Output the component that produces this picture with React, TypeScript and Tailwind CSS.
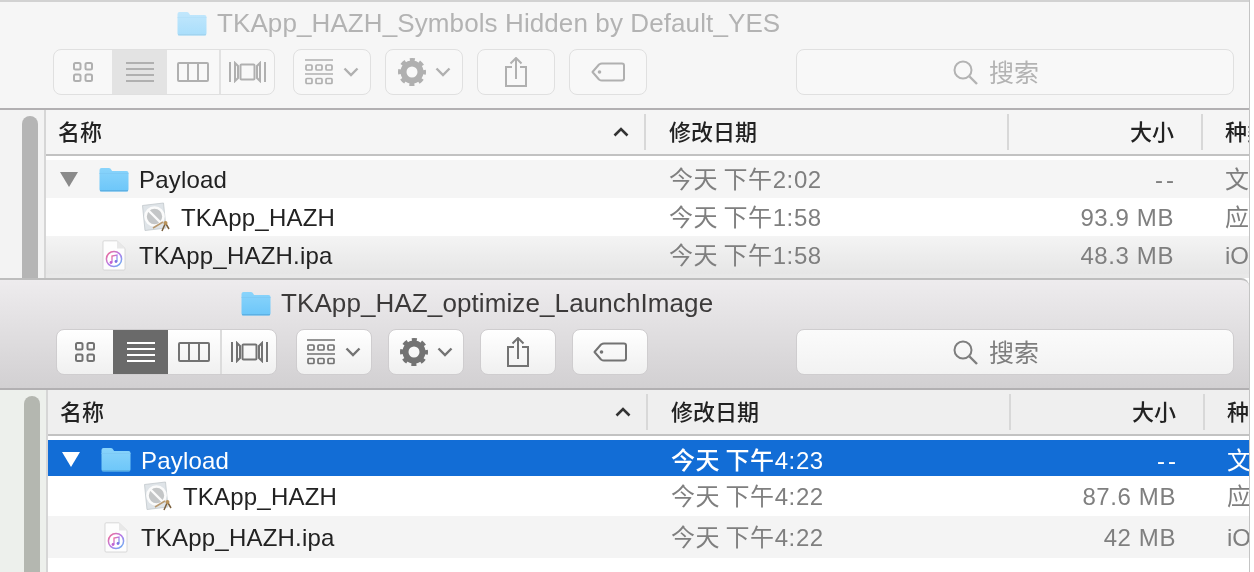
import { useId } from 'react';

const sans = "font-['Liberation_Sans','Noto_Sans_CJK_SC',sans-serif]";

function Folder({ w = 30, h = 25, dim = false }: { w?: number; h?: number; dim?: boolean }) {
  const id = useId();
  return (
    <svg width={w} height={h} viewBox="0 0 30 25" className="shrink-0">
      <defs>
        <linearGradient id={id} x1="0" y1="0" x2="0" y2="1">
          <stop offset="0" stopColor={dim ? '#c2e7fc' : '#8ad4fb'} />
          <stop offset="1" stopColor={dim ? '#a9defb' : '#6cc6f9'} />
        </linearGradient>
      </defs>
      <path d="M0.5 3Q0.5 1 2.5 1H10Q11.5 1 12.5 3L13 4H27.5Q29.5 4 29.5 6V22.5Q29.5 24.5 27.5 24.5H2.5Q0.5 24.5 0.5 22.5Z" fill={`url(#${id})`} />
      <path d="M0.5 6.5H29.5" stroke={dim ? '#b4e0f9' : '#7cc8f4'} strokeWidth="0.8" />
      <path d="M1 23.8H29" stroke={dim ? '#9fd0ec' : '#58a9dc'} strokeWidth="1" />
    </svg>
  );
}

function AppIcon() {
  return (
    <svg width="28" height="31" viewBox="0 0 28 31" className="shrink-0">
      <path d="M0.5 3.5L21.5 1L24 26L3 28.5Z" fill="#dfe4e8" stroke="#c2c8cc" strokeWidth="0.8" />
      <circle cx="12.5" cy="14.5" r="9" fill="#c4c6c7" stroke="#fbfbfb" strokeWidth="2.6" />
      <path d="M6.5 8.5L18.5 20.5" stroke="#fbfbfb" strokeWidth="2.4" />
      <path d="M11 26L21 20" stroke="#b89a72" strokeWidth="1.6" />
      <path d="M20 29L23.5 21L27 27" stroke="#7a5f3c" strokeWidth="1.5" fill="none" />
      <circle cx="23.5" cy="21" r="2" fill="#b9925a" />
    </svg>
  );
}

function IpaIcon() {
  const id = useId();
  return (
    <svg width="24" height="31" viewBox="0 0 24 31" className="shrink-0">
      <defs>
        <linearGradient id={id} x1="0" y1="0" x2="1" y2="1">
          <stop offset="0" stopColor="#f46a8e" />
          <stop offset="0.5" stopColor="#b67be8" />
          <stop offset="1" stopColor="#5fb6f4" />
        </linearGradient>
      </defs>
      <path d="M1 2Q1 .8 2 .8H15L23 8.5V29Q23 30 22 30H2Q1 30 1 29Z" fill="#fdfdfd" stroke="#cfcfcf" strokeWidth="0.8" />
      <path d="M15 .8V8.5H23Z" fill="#e8e8e8" />
      <circle cx="12" cy="19" r="7.6" fill="#fff" stroke={`url(#${id})`} strokeWidth="1.5" />
      <path d="M10 22.5V16L15 15V21.5" fill="none" stroke={`url(#${id})`} strokeWidth="1.3" />
      <circle cx="9" cy="22.5" r="1.4" fill="#c060d0" />
      <circle cx="14" cy="21.5" r="1.4" fill="#8070e0" />
    </svg>
  );
}

function Triangle({ selected }: { selected?: boolean }) {
  return (
    <svg width="18" height="15" viewBox="0 0 18 15" className="shrink-0">
      <path d="M0 0H18L9 15Z" fill={selected ? '#ffffff' : '#8a8a8a'} />
    </svg>
  );
}

function GridIcon() {
  return (
    <svg width="20" height="20" viewBox="0 0 20 20" fill="none" stroke="currentColor" strokeWidth="2">
      <rect x="1" y="1" width="6.5" height="6.5" rx="1.5" />
      <rect x="12.5" y="1" width="6.5" height="6.5" rx="1.5" />
      <rect x="1" y="12.5" width="6.5" height="6.5" rx="1.5" />
      <rect x="12.5" y="12.5" width="6.5" height="6.5" rx="1.5" />
    </svg>
  );
}

function ListIcon() {
  return (
    <svg width="28" height="20" viewBox="0 0 28 20" fill="currentColor">
      <rect y="0" width="28" height="2" />
      <rect y="6" width="28" height="2" />
      <rect y="12" width="28" height="2" />
      <rect y="18" width="28" height="2" />
    </svg>
  );
}

function ColumnsIcon() {
  return (
    <svg width="32" height="20" viewBox="0 0 32 20" fill="none" stroke="currentColor" strokeWidth="2">
      <rect x="1" y="1" width="30" height="18" rx="1" />
      <path d="M11 1V19M21 1V19" />
    </svg>
  );
}

function CoverIcon() {
  return (
    <svg width="37" height="22" viewBox="0 0 37 22" fill="none" stroke="currentColor" strokeWidth="2">
      <path d="M1 1V21M6 2V20L9 17V5Z" />
      <rect x="11.5" y="3.5" width="14" height="15" rx="1" />
      <path d="M36 1V21M31 2V20L28 17V5Z" />
    </svg>
  );
}

function GroupIcon() {
  return (
    <svg width="28" height="26" viewBox="0 0 28 26" fill="none" stroke="currentColor" strokeWidth="1.7">
      <path d="M0 1H28M0 15H28" />
      <rect x="1" y="6" width="6" height="5" rx="1" />
      <rect x="11" y="6" width="6" height="5" rx="1" />
      <rect x="21" y="6" width="6" height="5" rx="1" />
      <rect x="1" y="19.5" width="6" height="5" rx="1" />
      <rect x="11" y="19.5" width="6" height="5" rx="1" />
      <rect x="21" y="19.5" width="6" height="5" rx="1" />
    </svg>
  );
}

function Chevron() {
  return (
    <svg width="16" height="10" viewBox="0 0 16 10" fill="none" stroke="currentColor" strokeWidth="2.4">
      <path d="M1.5 1.5L8 8L14.5 1.5" />
    </svg>
  );
}

function GearIcon() {
  return (
    <svg width="28" height="28" viewBox="0 0 28 28" fill="none" stroke="currentColor">
      <circle cx="14" cy="14" r="8.5" strokeWidth="6" />
      <circle cx="14" cy="14" r="12" strokeWidth="4" strokeDasharray="4.9 4.52" strokeDashoffset="2.45" />
    </svg>
  );
}

function ShareIcon() {
  return (
    <svg width="22" height="30" viewBox="0 0 22 30" fill="none" stroke="currentColor" strokeWidth="2">
      <path d="M7 10H1V29H21V10H15" />
      <path d="M11 22V1M5.5 6.5L11 1L16.5 6.5" />
    </svg>
  );
}

function TagIcon() {
  return (
    <svg width="34" height="20" viewBox="0 0 34 20" fill="none" stroke="currentColor" strokeWidth="2">
      <path d="M11 1.5H31Q33 1.5 33 3.5V16.5Q33 18.5 31 18.5H11Q9.5 18.5 8 17.5L1.5 10L8 2.5Q9.5 1.5 11 1.5Z" strokeLinejoin="round" />
      <circle cx="8.5" cy="10" r="1.8" fill="currentColor" stroke="none" />
    </svg>
  );
}

function SearchIcon() {
  return (
    <svg width="25" height="25" viewBox="0 0 25 25" fill="none" stroke="currentColor" strokeWidth="2" className="shrink-0">
      <circle cx="10" cy="10" r="8.5" />
      <path d="M16.5 16.5L24 24" strokeWidth="2.4" />
    </svg>
  );
}

type Theme = {
  win: string;
  title: string;
  btn: string;
  sep: string;
  activeSeg: string;
  search: string;
  sidebar: string;
  thumb: string;
  header: string;
  icon: string;
  rowOdd: string;
  lastRow: string;
  titlePad: string;
  toolPad: string;
  toolGap: string;
  segW: string;
  firstSeg: string;
  groupMl: string;
  btnW: string;
  sideW: string;
  thumbPad: string;
  h: string;
};

const inactive: Theme = {
  win: 'h-[108px] bg-[#f6f6f6] border-t-[2px] border-[#d2d2d2] pt-[2px]',
  title: 'text-[#b3b3b3]',
  btn: 'bg-[#f8f8f8] border-[#e0e0e0]',
  sep: 'border-[#e2e2e2]',
  activeSeg: 'bg-[#e3e3e3] text-[#b0b0b0]',
  search: 'bg-[#f8f8f8] border-[#e0e0e0] text-[#b3b3b3]',
  sidebar: 'bg-[#f3f3f3] border-[#d6d6d6]',
  thumb: 'bg-[#b5b5b5]',
  header: 'bg-[#f5f5f5]',
  icon: 'text-[#b0b0b0]',
  rowOdd: 'bg-[#f5f5f5]',
  lastRow: 'bg-gradient-to-b from-[#f4f4f4] to-[#e6e6e6]',
  titlePad: 'pl-[177px]',
  toolPad: 'pl-[53px] pr-[15px]',
  toolGap: 'gap-[14px]',
  segW: 'w-[222px]',
  firstSeg: 'w-[58px]',
  groupMl: 'ml-[4px]',
  btnW: 'w-[78px]',
  sideW: 'w-[46px]',
  thumbPad: 'pl-[22px]',
  h: 'h-[278px]',
};

const active: Theme = {
  win: 'h-[110px] bg-gradient-to-b from-[#eeecee] to-[#d2d0d2] border-t-[2px] border-[#bdbdbd] rounded-tr-[8px] pt-[4px]',
  title: 'text-[#3c3a3a]',
  btn: 'bg-gradient-to-b from-[#ffffff] to-[#f0f0f0] border-[#cfcdcf]',
  sep: 'border-[#dcdcdc]',
  activeSeg: 'bg-[#6a6a6a] text-white',
  search: 'bg-gradient-to-b from-[#fbfbfb] to-[#f2f2f2] border-[#cfcdcf] text-[#7e7e7e]',
  sidebar: 'bg-[#edf0ec] border-[#d6d6d6]',
  thumb: 'bg-[#b4b7b0]',
  header: 'bg-[#efefef]',
  icon: 'text-[#737373]',
  rowOdd: 'bg-[#f4f4f4]',
  lastRow: 'bg-[#f4f4f4]',
  titlePad: 'pl-[241px]',
  toolPad: 'pl-[56px] pr-[15px]',
  toolGap: 'gap-[16px]',
  segW: 'w-[221px]',
  firstSeg: 'w-[56px]',
  groupMl: 'ml-[3px]',
  btnW: 'w-[76px]',
  sideW: 'w-[48px]',
  thumbPad: 'pl-[24px]',
  h: 'h-[294px]',
};

type Row = { name: string; date: string; size: string; kind: string };

function FinderWindow({
  theme,
  title,
  rows,
  selectedFirst,
  heights,
}: {
  theme: Theme;
  title: string;
  rows: Row[];
  selectedFirst?: boolean;
  heights: string[];
}) {
  const cols = 'grid grid-cols-[598px_363px_194px_1fr]';
  const iconCls = `${theme.icon} flex items-center justify-center`;
  const muted = 'text-[#7f7f7f]';
  return (
    <div className={`${theme.h} w-[1250px] border-r border-[#c4c4c4] flex flex-col overflow-hidden bg-white`}>
      {/* title + toolbar */}
      <div className={`${theme.win} shrink-0 flex flex-col`}>
        <div className={`${theme.titlePad} h-[38px] shrink-0 flex items-center gap-[10px]`}>
          <Folder dim={!selectedFirst} />
          <span className={`${theme.title} text-[26px] tracking-[0.1px] leading-none whitespace-nowrap`}>{title}</span>
        </div>
        <div className={`${theme.toolPad} ${theme.toolGap} mt-[7px] h-[46px] flex items-stretch`}>
          <div className={`${theme.btn} ${theme.segW} border rounded-[8px] flex overflow-hidden`}>
            <div className={`${iconCls} ${theme.firstSeg}`}><GridIcon /></div>
            <div className={`${theme.activeSeg} w-[55px] flex items-center justify-center`}><ListIcon /></div>
            <div className={`${iconCls} w-[54px] border-r-2 ${theme.sep}`}><ColumnsIcon /></div>
            <div className={`${iconCls} flex-1`}><CoverIcon /></div>
          </div>
          <div className={`${theme.btn} ${iconCls} ${theme.groupMl} ${theme.btnW} border rounded-[8px] gap-[10px]`}><GroupIcon /><Chevron /></div>
          <div className={`${theme.btn} ${iconCls} ${theme.btnW} border rounded-[8px] gap-[9px]`}><GearIcon /><Chevron /></div>
          <div className={`${theme.btn} ${iconCls} ${theme.btnW} border rounded-[8px]`}><ShareIcon /></div>
          <div className={`${theme.btn} ${iconCls} ${theme.btnW} border rounded-[8px]`}><TagIcon /></div>
          <div className={`${theme.search} pl-[156px] ml-auto w-[438px] border rounded-[8px] flex items-center gap-[11px] text-[25px]`}>
            <SearchIcon />
            <span className="pt-[3px]">搜索</span>
          </div>
        </div>
      </div>
      <div className="h-[2px] shrink-0 bg-[#b2b0b2]" />

      {/* list area */}
      <div className="flex flex-1 min-h-0">
        <div className={`${theme.sideW} ${theme.sidebar} ${theme.thumbPad} shrink-0 border-r-2 pt-[6px]`}>
          <div className={`${theme.thumb} w-[16px] h-full rounded-t-full`} />
        </div>
        <div className="flex-1 min-w-0 flex flex-col bg-white">
          <div className={`${cols} ${theme.header} h-[44px] shrink-0 text-[22px] text-[#222] font-medium`}>
            <div className="pl-[12px] pr-[15px] flex items-center justify-between">
              <span>名称</span>
              <svg width="16" height="10" viewBox="0 0 16 10" fill="none" stroke="#333" strokeWidth="2.6">
                <path d="M1.5 8.5L8 2L14.5 8.5" />
              </svg>
            </div>
            <div className="my-[4px] border-l-2 border-[#d8d8d8] pl-[23px] flex items-center">修改日期</div>
            <div className="my-[4px] border-l-2 border-[#d8d8d8] pr-[27px] flex items-center justify-end">大小</div>
            <div className="my-[4px] border-l-2 border-[#d8d8d8] pl-[22px] flex items-center overflow-hidden whitespace-nowrap">种类</div>
          </div>
          <div className="h-[2px] shrink-0 bg-[#c2c2c2]" />
          <div className="h-[4px] shrink-0" />
          {rows.map((row, i) => {
            const selected = selectedFirst && i === 0;
            const bg = selected ? 'bg-[#126dd6]' : i === 1 ? 'bg-white' : i === 2 ? theme.lastRow : theme.rowOdd;
            const textPad = selected ? 'pt-[3px]' : 'pt-[2px]';
            return (
              <div key={i} className={`${cols} ${bg} ${heights[i]} shrink-0 text-[24px] items-center`}>
                <div className={`flex items-center min-w-0 ${selected ? 'text-white' : 'text-[#222]'}`}>
                  {i === 0 && (
                    <div className="pl-[14px] flex items-center">
                      <Triangle selected={selected} />
                      <div className="ml-[21px]"><Folder /></div>
                    </div>
                  )}
                  {i === 1 && <div className="pl-[96px]"><AppIcon /></div>}
                  {i === 2 && <div className="pl-[56px]"><IpaIcon /></div>}
                  <span className={`${i === 1 ? 'ml-[11px]' : i === 2 ? 'ml-[13px]' : 'ml-[10px]'} ${textPad} tracking-[0.2px] whitespace-nowrap`}>{row.name}</span>
                </div>
                <div className={`${textPad} pl-[25px] tracking-[0.6px] [word-spacing:-2px] whitespace-nowrap ${selected ? 'text-white font-medium' : muted}`}>{row.date}</div>
                <div className={`${textPad} text-right whitespace-nowrap ${row.size === '--' ? 'pr-[24px] tracking-[3px]' : 'pr-[27px] tracking-[0.6px]'} ${selected ? 'text-white' : muted}`}>{row.size}</div>
                <div className={`${textPad} pl-[24px] whitespace-nowrap overflow-hidden ${selected ? 'text-white' : muted}`}>{row.kind}</div>
              </div>
            );
          })}
          <div className={`flex-1 ${selectedFirst ? 'bg-white' : 'bg-[#e8e8e8]'}`} />
        </div>
      </div>
    </div>
  );
}

export default function App() {
  return (
    <div className={`${sans} w-[1254px] h-[572px] overflow-hidden bg-white flex flex-col blur-[0.35px]`}>
      <FinderWindow
        theme={inactive}
        title="TKApp_HAZH_Symbols Hidden by Default_YES"
        heights={['h-[38px]', 'h-[38px]', 'h-[38px]']}
        rows={[
          { name: 'Payload', date: '今天 下午2:02', size: '--', kind: '文件夹' },
          { name: 'TKApp_HAZH', date: '今天 下午1:58', size: '93.9 MB', kind: '应用程序' },
          { name: 'TKApp_HAZH.ipa', date: '今天 下午1:58', size: '48.3 MB', kind: 'iOS App' },
        ]}
      />
      <FinderWindow
        theme={active}
        title="TKApp_HAZ_optimize_LaunchImage"
        selectedFirst
        heights={['h-[36px]', 'h-[40px]', 'h-[42px]']}
        rows={[
          { name: 'Payload', date: '今天 下午4:23', size: '--', kind: '文件夹' },
          { name: 'TKApp_HAZH', date: '今天 下午4:22', size: '87.6 MB', kind: '应用程序' },
          { name: 'TKApp_HAZH.ipa', date: '今天 下午4:22', size: '42 MB', kind: 'iOS App' },
        ]}
      />
    </div>
  );
}
